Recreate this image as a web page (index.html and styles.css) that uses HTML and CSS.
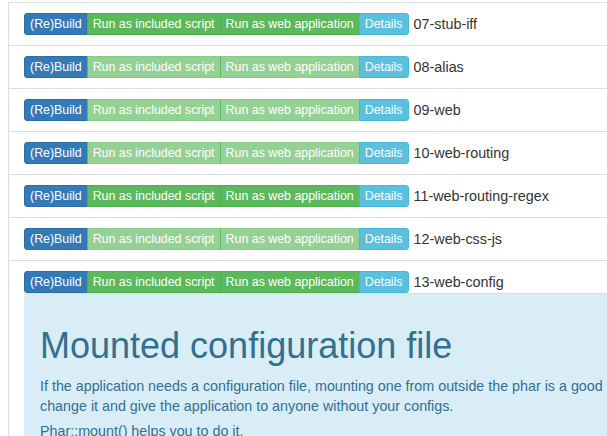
FILE: index.html
```html
<!DOCTYPE html>
<html>
<head>
<meta charset="utf-8">
<link rel="stylesheet" href="styles.css">
</head>
<body>
<div class="page">
  <ul class="list">
    <li class="item">
      <span class="group"><a class="btn primary">(Re)Build</a><a class="btn success">Run as included script</a><a class="btn success">Run as web application</a><a class="btn info">Details</a></span>
      <span class="name">07-stub-iff</span>
    </li>
    <li class="item">
      <span class="group"><a class="btn primary">(Re)Build</a><a class="btn success disabled">Run as included script</a><a class="btn success disabled">Run as web application</a><a class="btn info">Details</a></span>
      <span class="name">08-alias</span>
    </li>
    <li class="item">
      <span class="group"><a class="btn primary">(Re)Build</a><a class="btn success disabled">Run as included script</a><a class="btn success disabled">Run as web application</a><a class="btn info">Details</a></span>
      <span class="name">09-web</span>
    </li>
    <li class="item">
      <span class="group"><a class="btn primary">(Re)Build</a><a class="btn success disabled">Run as included script</a><a class="btn success disabled">Run as web application</a><a class="btn info">Details</a></span>
      <span class="name">10-web-routing</span>
    </li>
    <li class="item">
      <span class="group"><a class="btn primary">(Re)Build</a><a class="btn success">Run as included script</a><a class="btn success">Run as web application</a><a class="btn info">Details</a></span>
      <span class="name">11-web-routing-regex</span>
    </li>
    <li class="item">
      <span class="group"><a class="btn primary">(Re)Build</a><a class="btn success disabled">Run as included script</a><a class="btn success disabled">Run as web application</a><a class="btn info">Details</a></span>
      <span class="name">12-web-css-js</span>
    </li>
    <li class="item">
      <span class="group"><a class="btn primary">(Re)Build</a><a class="btn success">Run as included script</a><a class="btn success">Run as web application</a><a class="btn info">Details</a></span>
      <span class="name">13-web-config</span>
      <div class="details">
        <h1 class="title">Mounted configuration file</h1>
        <p class="text">If the application needs a configuration file, mounting one from outside the phar is a good idea to be able to change it and give the application to anyone without your configs.</p>
        <p class="text">Phar::mount() helps you to do it.</p>
      </div>
    </li>
  </ul>
</div>
</body>
</html>
```

FILE: styles.css
```css
html, body {
  margin: 0;
  padding: 0;
  overflow: hidden;
  background: #fff;
}
body {
  font-family: "Liberation Sans", Arial, Helvetica, sans-serif;
  font-size: 14.35px;
  line-height: 20px;
  color: #333;
}
.page {
  padding: 2px 0 0 8px;
  width: 736px;
}
.list {
  list-style: none;
  margin: 0;
  padding: 0;
}
.item {
  display: flex;
  flex-wrap: wrap;
  align-items: center;
  border: 1px solid #ddd;
  padding: 10px 15px;
  margin-bottom: -1px;
  background: #fff;
}
.group {
  display: flex;
}
.btn {
  display: block;
  font-size: 12.4px;
  line-height: 18px;
  padding: 1px 5px;
  border: 1px solid transparent;
  color: #fff;
  white-space: nowrap;
}
.btn + .btn {
  margin-left: -1px;
}
.btn:first-child {
  border-radius: 3px 0 0 3px;
}
.btn:last-child {
  border-radius: 0 3px 3px 0;
}
.primary {
  background: #337ab7;
  border-color: #2e6da4;
}
.success {
  background: #5cb85c;
  border-color: #4cae4c;
}
.success.disabled {
  background: #95d195;
  border-color: #89cc89;
  border-left-color: #5cb85c;
}
.info {
  background: #5bc0de;
  border-color: #46b8da;
}
.name {
  margin-left: 5px;
}
.details {
  flex: 0 0 100%;
  background: #d9edf7;
  border-top: 1px solid #c8e5f2;
  padding: 20px 16px 16px;
  color: #31708f;
  font-size: 14.3px;
}
.title {
  margin: 12px 0 10px;
  font-size: 36px;
  font-weight: 500;
  line-height: 40px;
  color: #31708f;
}
.text {
  margin: 0 0 5px;
}
```
